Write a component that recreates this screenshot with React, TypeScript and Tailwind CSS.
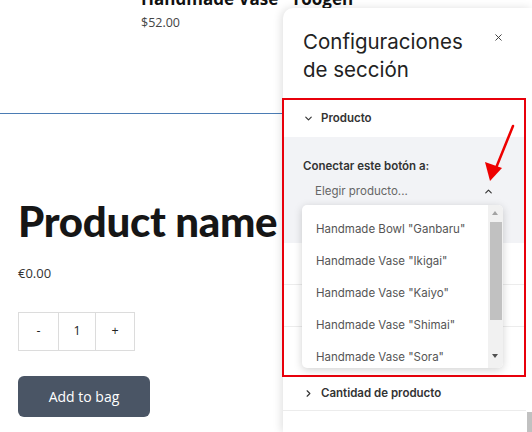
import { ChevronDown, ChevronRight, ChevronUp, X } from 'lucide-react';

const products = [
  'Handmade Bowl "Ganbaru"',
  'Handmade Vase "Ikigai"',
  'Handmade Vase "Kaiyo"',
  'Handmade Vase "Shimai"',
  'Handmade Vase "Sora"',
];

// ===== Product page behind the drawer =====
function ProductPage() {
  return (
    <div className="w-full" style={{ fontFamily: '"Open Sans", "Liberation Sans", sans-serif' }}>
      <div className="pl-[141px] -mt-[12px]">
        <div className="text-[17px] font-bold text-[#111] leading-[22px] whitespace-nowrap">
          Handmade Vase "Yoogen"
        </div>
        <div className="mt-[4px] text-[12.5px] text-[#444] leading-[18px]">$52.00</div>
      </div>

      <div className="mt-[81px] h-px w-full bg-[#4b7cb4]" />

      <div className="pl-[18px] pt-[83px]">
        <h1
          className="text-[42px] leading-[48px] font-black text-[#161616] tracking-[-0.3px] whitespace-nowrap"
          style={{ fontFamily: 'Lato, "Noto Sans", sans-serif' }}
        >
          Product name
        </h1>

        <div className="mt-[19px] text-[13px] text-[#333]">€0.00</div>

        <div className="mt-[28px] flex h-[39px] w-[117px] border border-[#dcdcdc] text-[12.5px] text-[#222]">
          <div className="flex w-[40px] items-center justify-center border-r border-[#dcdcdc]">-</div>
          <div className="flex w-[37px] items-center justify-center border-r border-[#dcdcdc]">1</div>
          <div className="flex flex-1 items-center justify-center">+</div>
        </div>

        <button className="mt-[25px] h-[41px] w-[132px] rounded-[6px] bg-[#4a5565] text-[14px] text-white">
          Add to bag
        </button>
      </div>
    </div>
  );
}

// ===== Settings drawer =====
function SettingsPanel() {
  return (
    <div
      className="absolute left-[283px] top-[8px] bottom-0 w-[249px] rounded-tl-[10px] bg-white shadow-[-2px_0_8px_rgba(0,0,0,0.12)]"
      style={{ fontFamily: 'Inter, "Noto Sans", sans-serif' }}
    >
      <div className="flex items-start justify-between pl-[20px] pr-[28px] pt-[20px]">
        <h2 className="text-[20.5px] leading-[28px] text-[#222] font-normal">
          Configuraciones
          <br />
          de sección
        </h2>
        <X size={11} strokeWidth={2} className="mt-[4px] text-[#333]" />
      </div>

      {/* bloque Producto, marcado en rojo */}
      <div className="mt-[14px] mr-[6px] -ml-px border-[2.5px] border-[#e8000b]">
        <div className="flex h-[37px] items-center gap-[7px] pl-[19px] text-[11.5px] font-semibold text-[#333]">
          <ChevronDown size={11} strokeWidth={2.5} />
          Producto
        </div>
        <div className="h-[106px] bg-[#f2f3f6] pl-[19px] pt-[21px]">
          <div className="text-[11.5px] font-semibold text-[#333]">Conectar este botón a:</div>
          <div className="mt-[8px] flex items-center justify-between pl-[12px] pr-[30px] text-[11.5px] text-[#666]">
            Elegir producto...
            <ChevronUp size={11} strokeWidth={2.5} className="text-[#333]" />
          </div>
        </div>
        <div className="h-[42px] border-b border-[#ececec]" />
        <div className="h-[42px] border-b border-[#ececec]" />
        <div className="h-[48px]" />
      </div>

      <div className="mr-[6px] flex h-[34px] items-center gap-[7px] border-b border-[#ececec] pl-[20px] text-[11.5px] font-semibold text-[#333]">
        <ChevronRight size={11} strokeWidth={2.5} />
        Cantidad de producto
      </div>

      {/* lista desplegable */}
      <div className="absolute left-[19px] top-[197px] flex h-[163px] w-[201px] overflow-hidden rounded-[5px] bg-white shadow-[0_2px_8px_rgba(0,0,0,0.18)]">
        <ul className="flex-1 pt-[9px]">
          {products.map((p) => (
            <li key={p} className="flex h-[32px] items-center pl-[14px] text-[11.5px] text-[#555]">
              {p}
            </li>
          ))}
        </ul>
        <div className="relative w-[15px] bg-[#f1f1f1]">
          <div className="absolute left-[4px] top-[6px] h-0 w-0 border-x-[3.5px] border-b-[4px] border-x-transparent border-b-[#a3a3a3]" />
          <div className="absolute left-[2px] top-[17px] h-[98px] w-[12px] bg-[#c1c1c1]" />
          <div className="absolute left-[4px] bottom-[10px] h-0 w-0 border-x-[3.5px] border-t-[4px] border-x-transparent border-t-[#505050]" />
        </div>
      </div>

      <div className="absolute right-0 top-[404px] bottom-0 w-[5px] bg-[#c1c1c1]" />
    </div>
  );
}

export default function App() {
  return (
    <div className="relative h-[432px] w-[532px] overflow-hidden bg-white">
      <ProductPage />
      <SettingsPanel />

      {/* flecha roja de anotación */}
      <svg className="absolute left-0 top-0" width="532" height="432" viewBox="0 0 532 432">
        <line x1="513" y1="126" x2="496" y2="168" stroke="#ee0000" strokeWidth="2.5" strokeLinecap="round" />
        <polygon points="490,181 485,162 502,168" fill="#ee0000" />
      </svg>
    </div>
  );
}
